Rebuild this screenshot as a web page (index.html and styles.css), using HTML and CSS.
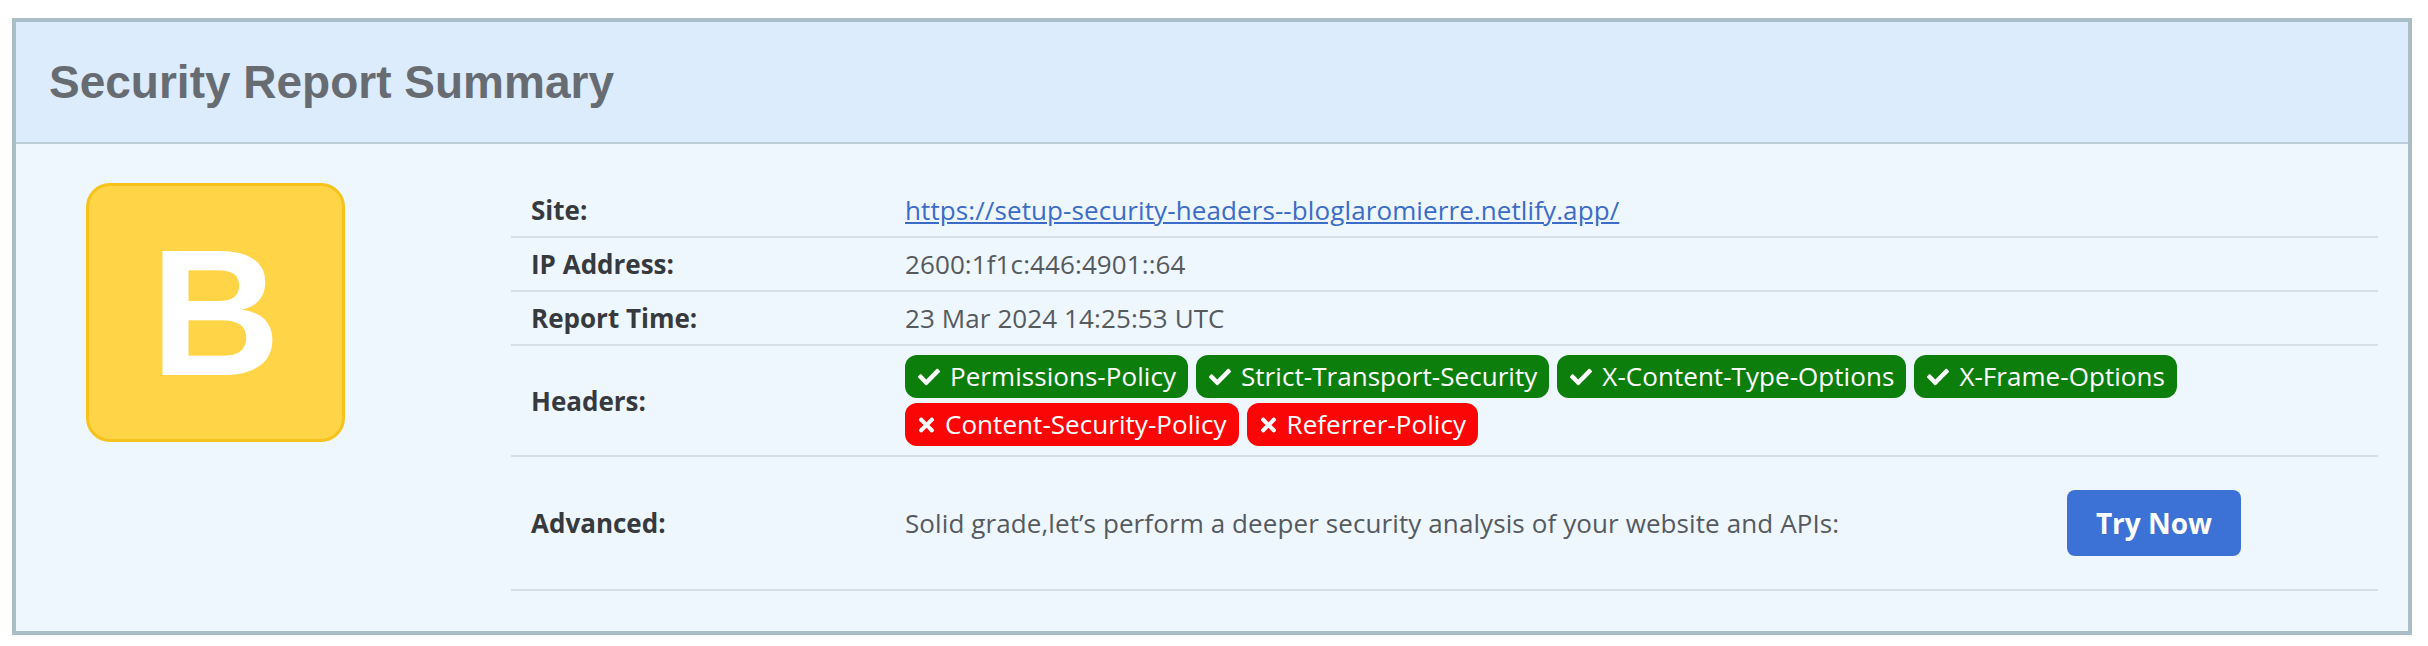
FILE: index.html
```html
<!DOCTYPE html>
<html lang="en">
<head>
<meta charset="utf-8">
<title>Security Report Summary</title>
<link rel="stylesheet" href="styles.css">
</head>
<body>
<section class="report">
  <header class="report-head">
    <h1 class="report-title">Security Report Summary</h1>
  </header>
  <div class="report-body">
    <div class="grade-col">
      <div class="grade">B</div>
    </div>
    <div class="info">
      <div class="row">
        <div class="label">Site:</div>
        <div class="value"><a class="link" href="#">https://setup-security-headers--bloglaromierre.netlify.app/</a></div>
      </div>
      <div class="row">
        <div class="label">IP Address:</div>
        <div class="value">2600:1f1c:446:4901::64</div>
      </div>
      <div class="row">
        <div class="label">Report Time:</div>
        <div class="value">23 Mar 2024 14:25:53 UTC</div>
      </div>
      <div class="row row-headers">
        <div class="label">Headers:</div>
        <div class="value badges">
          <span class="badge good"><svg class="ico" viewBox="0 0 512 512"><path d="M173.9 439.4l-166.4-166.4c-10-10-10-26.2 0-36.2l36.2-36.2c10-10 26.2-10 36.2 0L192 312.7 432.1 72.6c10-10 26.2-10 36.2 0l36.2 36.2c10 10 10 26.2 0 36.2l-294.4 294.4c-10 10-26.2 10-36.2 0z"/></svg>Permissions-Policy</span>
          <span class="badge good"><svg class="ico" viewBox="0 0 512 512"><path d="M173.9 439.4l-166.4-166.4c-10-10-10-26.2 0-36.2l36.2-36.2c10-10 26.2-10 36.2 0L192 312.7 432.1 72.6c10-10 26.2-10 36.2 0l36.2 36.2c10 10 10 26.2 0 36.2l-294.4 294.4c-10 10-26.2 10-36.2 0z"/></svg>Strict-Transport-Security</span>
          <span class="badge good"><svg class="ico" viewBox="0 0 512 512"><path d="M173.9 439.4l-166.4-166.4c-10-10-10-26.2 0-36.2l36.2-36.2c10-10 26.2-10 36.2 0L192 312.7 432.1 72.6c10-10 26.2-10 36.2 0l36.2 36.2c10 10 10 26.2 0 36.2l-294.4 294.4c-10 10-26.2 10-36.2 0z"/></svg>X-Content-Type-Options</span>
          <span class="badge good"><svg class="ico" viewBox="0 0 512 512"><path d="M173.9 439.4l-166.4-166.4c-10-10-10-26.2 0-36.2l36.2-36.2c10-10 26.2-10 36.2 0L192 312.7 432.1 72.6c10-10 26.2-10 36.2 0l36.2 36.2c10 10 10 26.2 0 36.2l-294.4 294.4c-10 10-26.2 10-36.2 0z"/></svg>X-Frame-Options</span>
          <span class="badge bad"><svg class="ico ico-x" viewBox="0 0 352 512"><path d="M242.7 256l100.1-100.1c12.3-12.3 12.3-32.2 0-44.5l-22.2-22.2c-12.3-12.3-32.2-12.3-44.5 0L176 189.3 75.9 89.2c-12.3-12.3-32.2-12.3-44.5 0L9.2 111.5c-12.3 12.3-12.3 32.2 0 44.5L109.3 256 9.2 356.1c-12.3 12.3-12.3 32.2 0 44.5l22.2 22.2c12.3 12.3 32.2 12.3 44.5 0L176 322.7l100.1 100.1c12.3 12.3 32.2 12.3 44.5 0l22.2-22.2c12.3-12.3 12.3-32.2 0-44.5L242.7 256z"/></svg>Content-Security-Policy</span>
          <span class="badge bad"><svg class="ico ico-x" viewBox="0 0 352 512"><path d="M242.7 256l100.1-100.1c12.3-12.3 12.3-32.2 0-44.5l-22.2-22.2c-12.3-12.3-32.2-12.3-44.5 0L176 189.3 75.9 89.2c-12.3-12.3-32.2-12.3-44.5 0L9.2 111.5c-12.3 12.3-12.3 32.2 0 44.5L109.3 256 9.2 356.1c-12.3 12.3-12.3 32.2 0 44.5l22.2 22.2c12.3 12.3 32.2 12.3 44.5 0L176 322.7l100.1 100.1c12.3 12.3 32.2 12.3 44.5 0l22.2-22.2c12.3-12.3 12.3-32.2 0-44.5L242.7 256z"/></svg>Referrer-Policy</span>
        </div>
      </div>
      <div class="row row-adv">
        <div class="label">Advanced:</div>
        <div class="value adv">
          <span class="adv-text">Solid grade,let’s perform a deeper security analysis of your website and APIs:</span>
          <a class="btn" href="#">Try Now</a>
        </div>
      </div>
    </div>
  </div>
</section>
</body>
</html>
```
FILE: styles.css
```css
html, body {
  margin: 0;
  padding: 0;
  background: #ffffff;
}

body {
  font-family: "Open Sans", "Noto Sans", sans-serif;
}

.report {
  margin: 18px 16px 13px 12px;
  border: 4px solid #a9bec6;
  background: #eef6fe;
}

.report-head {
  height: 120px;
  display: flex;
  align-items: center;
  padding-left: 33px;
  background: #dcecfc;
  border-bottom: 2px solid #bccfd9;
}

.report-title {
  margin: 0;
  font-family: "Liberation Sans", Arial, sans-serif;
  font-weight: bold;
  font-size: 46px;
  color: #676b72;
  line-height: 1;
}

.report-body {
  display: flex;
  align-items: flex-start;
  padding: 40px 30px 40px 70px;
}

.grade-col {
  width: 425px;
  flex: none;
}

.grade {
  width: 253px;
  height: 253px;
  margin-top: -1px;
  border: 3px solid #f7c21c;
  border-radius: 24px;
  background: #ffd447;
  color: #ffffff;
  font-family: "Liberation Sans", Arial, sans-serif;
  font-weight: bold;
  font-size: 180px;
  display: flex;
  align-items: center;
  justify-content: center;
  line-height: 1;
}

.info {
  flex: 1;
}

.row {
  display: grid;
  grid-template-columns: 394px 1fr;
  align-items: center;
  border-bottom: 2px solid #d6dee7;
  padding: 8px 0;
  min-height: 36px;
  font-size: 26px;
  line-height: 36px;
}

.row-headers {
  padding: 9px 0 9px;
}

.label {
  padding-left: 20px;
  font-weight: bold;
  color: #363a3e;
}

.value {
  color: #555a5f;
  letter-spacing: 0.1px;
}

.link {
  color: #3b6cc7;
  text-decoration: underline;
}

.badges {
  display: flex;
  flex-wrap: wrap;
  gap: 5px 8px;
  letter-spacing: 0.05px;
}

.badge {
  display: inline-flex;
  align-items: center;
  height: 43px;
  padding: 0 12px 0 13px;
  border-radius: 12px;
  color: #ffffff;
  font-size: 26px;
  line-height: 43px;
  box-sizing: border-box;
}

.badge.good {
  background: #0b7e0b;
}

.badge.bad {
  background: #fa0606;
}

.ico {
  width: 22px;
  height: 22px;
  fill: #ffffff;
  margin-right: 10px;
  flex: none;
}

.ico-x {
  width: 17px;
  height: 22px;
  margin-right: 10px;
}

.adv {
  display: flex;
  align-items: center;
}

.btn {
  margin: 25px 137px 25px auto;
  width: 174px;
  height: 66px;
  border-radius: 8px;
  background: #3c71d6;
  color: #ffffff;
  font-weight: bold;
  font-size: 28px;
  letter-spacing: 0;
  text-decoration: none;
  display: flex;
  align-items: center;
  justify-content: center;
}
```
